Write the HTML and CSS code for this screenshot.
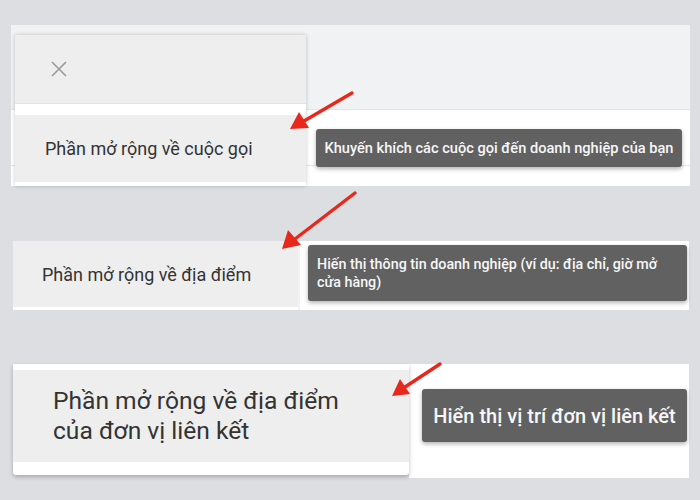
FILE: index.html
```html
<!DOCTYPE html>
<html lang="vi">
<head>
<meta charset="utf-8">
<link rel="stylesheet" href="styles.css">
</head>
<body>
<div class="page">
  <section class="shot shot-one">
    <div class="menu-card">
      <div class="menu-head">
        <svg class="close-icon" width="16" height="16" viewBox="0 0 16 16"><path d="M1 1L15 15M15 1L1 15" stroke="#9a9a9a" stroke-width="1.6" fill="none"/></svg>
      </div>
      <div class="menu-gap"></div>
      <div class="menu-item">Phần mở rộng về cuộc gọi</div>
    </div>
    <div class="tip tip-one">Khuyến khích các cuộc gọi đến doanh nghiệp của bạn</div>
  </section>

  <section class="shot shot-two">
    <div class="item-two">Phần mở rộng về địa điểm</div>
    <div class="side side-two">
      <div class="tip tip-two">Hiến thị thông tin doanh nghiệp (ví dụ: địa chỉ, giờ mở cửa hàng)</div>
    </div>
  </section>

  <section class="shot shot-three">
    <div class="card-three">
      <div class="item-three">Phần mở rộng về địa điểm<br>của đơn vị liên kết</div>
    </div>
    <div class="side side-three">
      <div class="tip tip-three">Hiển thị vị trí đơn vị liên kết</div>
    </div>
  </section>

  <svg class="arrows" width="700" height="500" viewBox="0 0 700 500">
    <g fill="#e8281c" stroke="#e8281c" stroke-width="3.4" stroke-linecap="round">
      <line x1="352" y1="93" x2="304" y2="121"/>
      <polygon stroke="none" points="290,129 299,112 309,128"/>
      <line x1="355" y1="193" x2="295" y2="239"/>
      <polygon stroke="none" points="282,249 288,230 301,245"/>
      <line x1="440" y1="364" x2="405" y2="387"/>
      <polygon stroke="none" points="392,396 400,379 410,394"/>
    </g>
  </svg>
</div>
</body>
</html>
```

FILE: styles.css
```css
* { box-sizing: border-box; }
html, body { margin: 0; padding: 0; }
body {
  background: #dcdee2;
  font-family: Roboto, "Noto Sans", "Liberation Sans", sans-serif;
}
.page {
  position: relative;
  width: 700px;
  height: 500px;
  padding-top: 25px;
  overflow: hidden;
}
.shot { display: flex; align-items: flex-start; }

/* panel 1 */
.shot-one {
  margin-left: 11px;
  width: 679px;
  height: 161px;
  background:
    linear-gradient(#f1f2f4 0, #f1f2f4 84px, #e4e5e7 84px, #e4e5e7 85px, #ffffff 85px, #ffffff 140px, #e6e6e6 140px, #e6e6e6 141px, #ffffff 141px);
}
.menu-card {
  margin: 10px 0 0 4px;
  width: 291px;
  height: 151px;
  background: #ffffff;
  box-shadow: 0 0 4px rgba(0,0,0,0.22);
  display: flex;
  flex-direction: column;
}
.menu-head {
  height: 69px;
  background: #eeeeee;
  border-bottom: 1px solid #e2e2e2;
  display: flex;
  align-items: center;
  padding-left: 36px;
}
.close-icon { display: block; }
.menu-gap { height: 11px; background: #ffffff; }
.menu-item {
  height: 67px;
  background: #eeeeee;
  padding-left: 30px;
  display: flex;
  align-items: center;
  font-size: 18px;
  color: #333333;
}
.tip {
  background: #616161;
  color: #f7f7f7;
  border-radius: 3px;
  box-shadow: 0 2px 4px rgba(0,0,0,0.3);
  font-weight: 500;
}
.tip-one {
  margin: 104px 0 0 10px;
  width: 366px;
  height: 38px;
  font-size: 14.6px;
  display: flex;
  align-items: center;
  justify-content: center;
  white-space: nowrap;
}

/* panel 2 */
.shot-two {
  margin: 55px 0 0 13px;
  width: 676px;
  height: 69px;
  background: #f3f3f3;
}
.item-two {
  width: 285px;
  height: 69px;
  background: #eeeeee;
  border-bottom: 3px solid #ffffff;
  padding-left: 29px;
  display: flex;
  align-items: center;
  font-size: 18px;
  color: #333333;
}
.side { background: #ffffff; }
.side-two {
  margin-left: 2px;
  width: 389px;
  height: 69px;
  padding: 4px 0 0 8px;
}
.tip-two {
  width: 379px;
  height: 56px;
  padding: 10px 8px 0 9px;
  font-size: 14.3px;
  line-height: 18px;
}

/* panel 3 */
.shot-three {
  margin: 54px 0 0 13px;
  width: 676px;
  height: 114px;
}
.card-three {
  width: 396px;
  height: 111px;
  background: #ffffff;
  padding: 6px 0 13px;
  border-radius: 0 0 3px 3px;
  box-shadow: 0 2px 4px rgba(0,0,0,0.25);
  position: relative;
  z-index: 1;
}
.item-three {
  height: 92px;
  background: #eeeeee;
  padding-left: 40px;
  display: flex;
  align-items: center;
  font-size: 24.6px;
  line-height: 30px;
  color: #333333;
}
.side-three {
  width: 280px;
  height: 114px;
  padding: 25px 0 0 13px;
}
.tip-three {
  width: 265px;
  height: 53px;
  font-size: 20px;
  display: flex;
  align-items: center;
  justify-content: center;
  white-space: nowrap;
}

.arrows {
  position: absolute;
  left: 0;
  top: 0;
  z-index: 5;
  pointer-events: none;
}
```
